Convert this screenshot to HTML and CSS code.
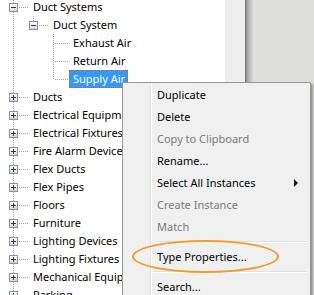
FILE: index.html
```html
<!DOCTYPE html>
<html lang="en">
<head>
    <meta charset="UTF-8">
    <title>Project Browser</title>
    <link rel="stylesheet" href="styles.css">
</head>
<body>
    <div class="window">
        <div class="tree">
            <ul class="tree-list">
                <li class="row first"><span class="node"><span class="box minus"></span></span><span class="label">Duct Systems</span></li>
                <li class="row"><span class="pipe"></span><span class="node last"><span class="box minus"></span></span><span class="label">Duct System</span></li>
                <li class="row"><span class="pipe"></span><span class="blank"></span><span class="node"></span><span class="label">Exhaust Air</span></li>
                <li class="row"><span class="pipe"></span><span class="blank"></span><span class="node"></span><span class="label">Return Air</span></li>
                <li class="row"><span class="pipe"></span><span class="blank"></span><span class="node last"></span><span class="label selected">Supply Air</span></li>
                <li class="row"><span class="node"><span class="box plus"></span></span><span class="label">Ducts</span></li>
                <li class="row"><span class="node"><span class="box plus"></span></span><span class="label">Electrical Equipment</span></li>
                <li class="row"><span class="node"><span class="box plus"></span></span><span class="label">Electrical Fixtures</span></li>
                <li class="row"><span class="node"><span class="box plus"></span></span><span class="label">Fire Alarm Devices</span></li>
                <li class="row"><span class="node"><span class="box plus"></span></span><span class="label">Flex Ducts</span></li>
                <li class="row"><span class="node"><span class="box plus"></span></span><span class="label">Flex Pipes</span></li>
                <li class="row"><span class="node"><span class="box plus"></span></span><span class="label">Floors</span></li>
                <li class="row"><span class="node"><span class="box plus"></span></span><span class="label">Furniture</span></li>
                <li class="row"><span class="node"><span class="box plus"></span></span><span class="label">Lighting Devices</span></li>
                <li class="row"><span class="node"><span class="box plus"></span></span><span class="label">Lighting Fixtures</span></li>
                <li class="row"><span class="node"><span class="box plus"></span></span><span class="label">Mechanical Equipment</span></li>
                <li class="row"><span class="node"><span class="box plus"></span></span><span class="label">Parking</span></li>
            </ul>
        </div>
        <div class="scroll-strip"></div>
        <div class="edge"></div>
        <div class="backdrop"></div>
    </div>

    <div class="context-menu">
        <div class="menu-item">Duplicate</div>
        <div class="menu-item">Delete</div>
        <div class="menu-item disabled">Copy to Clipboard</div>
        <div class="menu-item">Rename...</div>
        <div class="menu-item has-sub">Select All Instances<span class="arrow"></span></div>
        <div class="menu-item disabled">Create Instance</div>
        <div class="menu-item disabled">Match</div>
        <div class="separator"></div>
        <div class="menu-item">Type Properties...</div>
        <div class="separator"></div>
        <div class="menu-item">Search...</div>
        <div class="highlight-ring"></div>
    </div>
</body>
</html>
```

FILE: styles.css
```css
:root {
    --tree-line: #a0a0a0;
    --menu-bg: #f0f0f0;
    --menu-border: #979797;
    --select-blue: #3399ff;
    --ring-orange: #f39a2b;
}

* {
    margin: 0;
    padding: 0;
    box-sizing: border-box;
}

body {
    width: 314px;
    height: 295px;
    overflow: hidden;
    position: relative;
    font-family: 'Segoe UI', 'Noto Sans', sans-serif;
    font-size: 11px;
    color: #000;
    background: #dfdfdd;
}

.window {
    display: flex;
    height: 295px;
}

/* tree panel */

.tree {
    width: 225px;
    height: 295px;
    flex: none;
    background: #fff;
    overflow: hidden;
    padding-left: 3px;
}

.tree-list {
    list-style: none;
}

.row {
    display: flex;
    height: 18px;
    align-items: stretch;
    white-space: nowrap;
}

/* list is scrolled by 2px, so the first row shows only 16px */
.row.first {
    height: 16px;
}

.pipe,
.blank {
    width: 20px;
    flex: none;
    position: relative;
}

.node {
    width: 26px;
    flex: none;
    position: relative;
}

.pipe::before,
.node::before {
    content: '';
    position: absolute;
    left: 10px;
    top: 0;
    width: 1px;
    height: 100%;
    background: repeating-linear-gradient(to bottom, var(--tree-line) 0 1px, transparent 1px 2px);
}

.node.last::before {
    height: 9px;
}

.node::after {
    content: '';
    position: absolute;
    left: 11px;
    top: 9px;
    width: 15px;
    height: 1px;
    background: repeating-linear-gradient(to right, transparent 0 1px, var(--tree-line) 1px 2px);
}

.first .node::after {
    top: 7px;
}

.box {
    position: absolute;
    left: 6px;
    top: 5px;
    width: 9px;
    height: 9px;
    border: 1px solid #8f8f8f;
    background: linear-gradient(#ffffff, #d8d8d8);
    z-index: 1;
}

.first .box {
    top: 3px;
}

.box::before {
    content: '';
    position: absolute;
    left: 1px;
    top: 3px;
    width: 5px;
    height: 1px;
    background: #1e3a6e;
}

.box.plus::after {
    content: '';
    position: absolute;
    left: 3px;
    top: 1px;
    width: 1px;
    height: 5px;
    background: #1e3a6e;
}

.label {
    line-height: 18px;
    padding: 0 3px 0 4px;
}

.first .label {
    line-height: 14px;
}

.label.selected {
    background: var(--select-blue);
    color: #fff;
    outline: 1px dotted #cc6600;
    outline-offset: -1px;
}

/* right side */

.scroll-strip {
    width: 20px;
    flex: none;
    background: #eeeeee;
}

.edge {
    width: 8px;
    flex: none;
    background: linear-gradient(to right, #6a6a6a, #a8a8a8 30%, #d6d6d4);
}

.backdrop {
    flex: 1;
    background: #dfdfdd;
}

/* context menu */

.context-menu {
    position: absolute;
    left: 122px;
    top: 82px;
    width: 189px;
    height: 213px;
    overflow: hidden;
    padding: 1px;
    border: 1px solid var(--menu-border);
    border-bottom: none;
    background: linear-gradient(to right, var(--menu-bg) 27px, #e2e3e3 27px 28px, #ffffff 28px 29px, var(--menu-bg) 29px);
    box-shadow: 2px 2px 2px rgba(0, 0, 0, 0.35);
}

.menu-item {
    height: 22px;
    line-height: 22px;
    padding-left: 33px;
    padding-right: 11px;
    display: flex;
    align-items: center;
    justify-content: space-between;
    white-space: nowrap;
}

.menu-item.disabled {
    color: #7a7a7a;
}

.arrow {
    width: 0;
    height: 0;
    border-left: 4px solid #1a1a1a;
    border-top: 4px solid transparent;
    border-bottom: 4px solid transparent;
}

.separator {
    height: 8px;
    margin-left: 29px;
    margin-right: 2px;
    display: flex;
    flex-direction: column;
    justify-content: center;
}

.separator::before {
    content: '';
    height: 1px;
    background: #e0e0e0;
    border-bottom: 1px solid #fff;
    box-sizing: content-box;
}

.highlight-ring {
    position: absolute;
    left: 9px;
    top: 157px;
    width: 147px;
    height: 33px;
    border: 2px solid var(--ring-orange);
    border-radius: 50%;
}
```
